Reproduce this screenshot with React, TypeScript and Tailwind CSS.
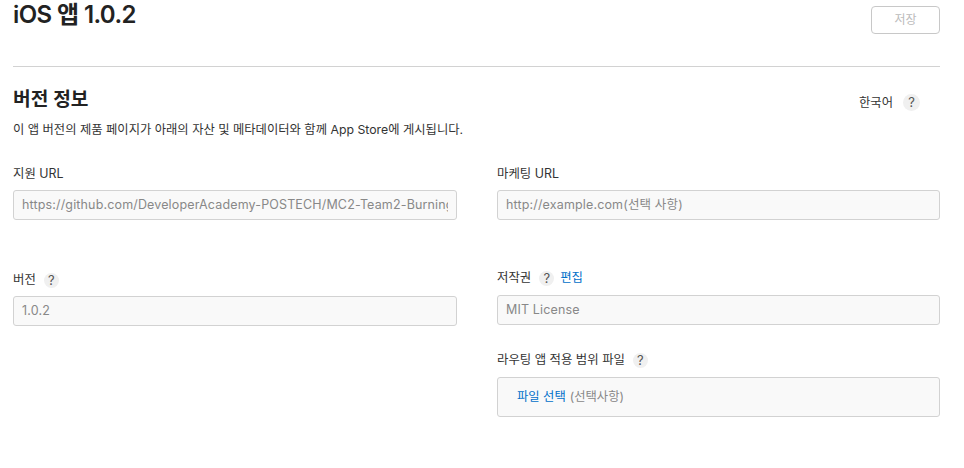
import type { ReactNode } from "react";

const font = "font-['Inter','Noto_Sans_CJK_KR',sans-serif]";

function Help({ big }: { big?: boolean }) {
  return (
    <span
      className={`flex items-center justify-center rounded-full bg-[#f0f0f0] text-[13px] leading-none text-[#555] ${
        big ? "ml-[10px] h-[17px] w-[17px]" : "ml-[8px] h-[15px] w-[15px]"
      }`}
    >
      ?
    </span>
  );
}

function Label({ children }: { children: ReactNode }) {
  return <div className="flex h-[16px] items-center text-[12.4px] leading-[16px] text-[#333]">{children}</div>;
}

function Field({ value, placeholder }: { value?: string; placeholder?: string }) {
  return (
    <input
      readOnly
      value={value}
      placeholder={placeholder}
      className="h-[30px] w-full rounded-[3px] border border-[#d2d2d2] bg-[#f9f9f9] px-[8px] pb-[1px] text-[12.5px] tracking-[0.15px] text-[#888] outline-none placeholder:text-[#888]"
    />
  );
}

export default function App() {
  return (
    <div className={`${font} h-[468px] w-[964px] overflow-hidden bg-white pl-[13px] pr-[24px]`}>
      <header className="flex h-[67px] items-start justify-between border-b border-[#d2d2d2]">
        <h1 className="mt-[-1px] text-[24px] leading-[32px] font-semibold tracking-[-0.6px] text-[#222]">iOS 앱 1.0.2</h1>
        <button className="mt-[6px] h-[28px] w-[69px] rounded-[4px] border border-[#c8c8c8] text-[12px] text-[#bbb]">저장</button>
      </header>

      <section className="flex items-start justify-between">
        <div>
          <h2 className="mt-[20px] text-[19.2px] leading-[24px] font-semibold text-[#222]">버전 정보</h2>
          <p className="mt-[11px] text-[12.3px] leading-[16px] text-[#333]">
            이 앱 버전의 제품 페이지가 아래의 자산 및 메타데이터와 함께 App Store에 게시됩니다.
          </p>
        </div>
        <div className="mt-[27px] mr-[20px] flex items-center text-[12.3px] leading-[16px] text-[#333]">
          한국어
          <Help big />
        </div>
      </section>

      <div className="mt-[28px] grid grid-cols-[444px_443px] gap-x-[40px]">
        <div>
          <Label>지원 URL</Label>
          <div className="mt-[8px]">
            <Field value="https://github.com/DeveloperAcademy-POSTECH/MC2-Team2-BurningRiding" />
          </div>
          <div className="mt-[52px]">
            <Label>
              버전
              <Help />
            </Label>
          </div>
          <div className="mt-[8px]">
            <Field value="1.0.2" />
          </div>
        </div>

        <div>
          <Label>마케팅 URL</Label>
          <div className="mt-[8px]">
            <Field placeholder="http://example.com(선택 사항)" />
          </div>
          <div className="mt-[50px]">
            <Label>
              저작권
              <Help />
              <a className="ml-[6px] text-[#0070c9]">편집</a>
            </Label>
          </div>
          <div className="mt-[9px]">
            <Field value="MIT License" />
          </div>
          <div className="mt-[27px]">
            <Label>
              라우팅 앱 적용 범위 파일
              <Help />
            </Label>
          </div>
          <div className="mt-[9px] flex h-[40px] items-center rounded-[3px] border border-[#d2d2d2] bg-[#f9f9f9] pl-[19px] text-[12.3px] text-[#888]">
            <a className="text-[#0070c9]">파일 선택</a>
            <span className="ml-[4px]">(선택사항)</span>
          </div>
        </div>
      </div>
    </div>
  );
}
